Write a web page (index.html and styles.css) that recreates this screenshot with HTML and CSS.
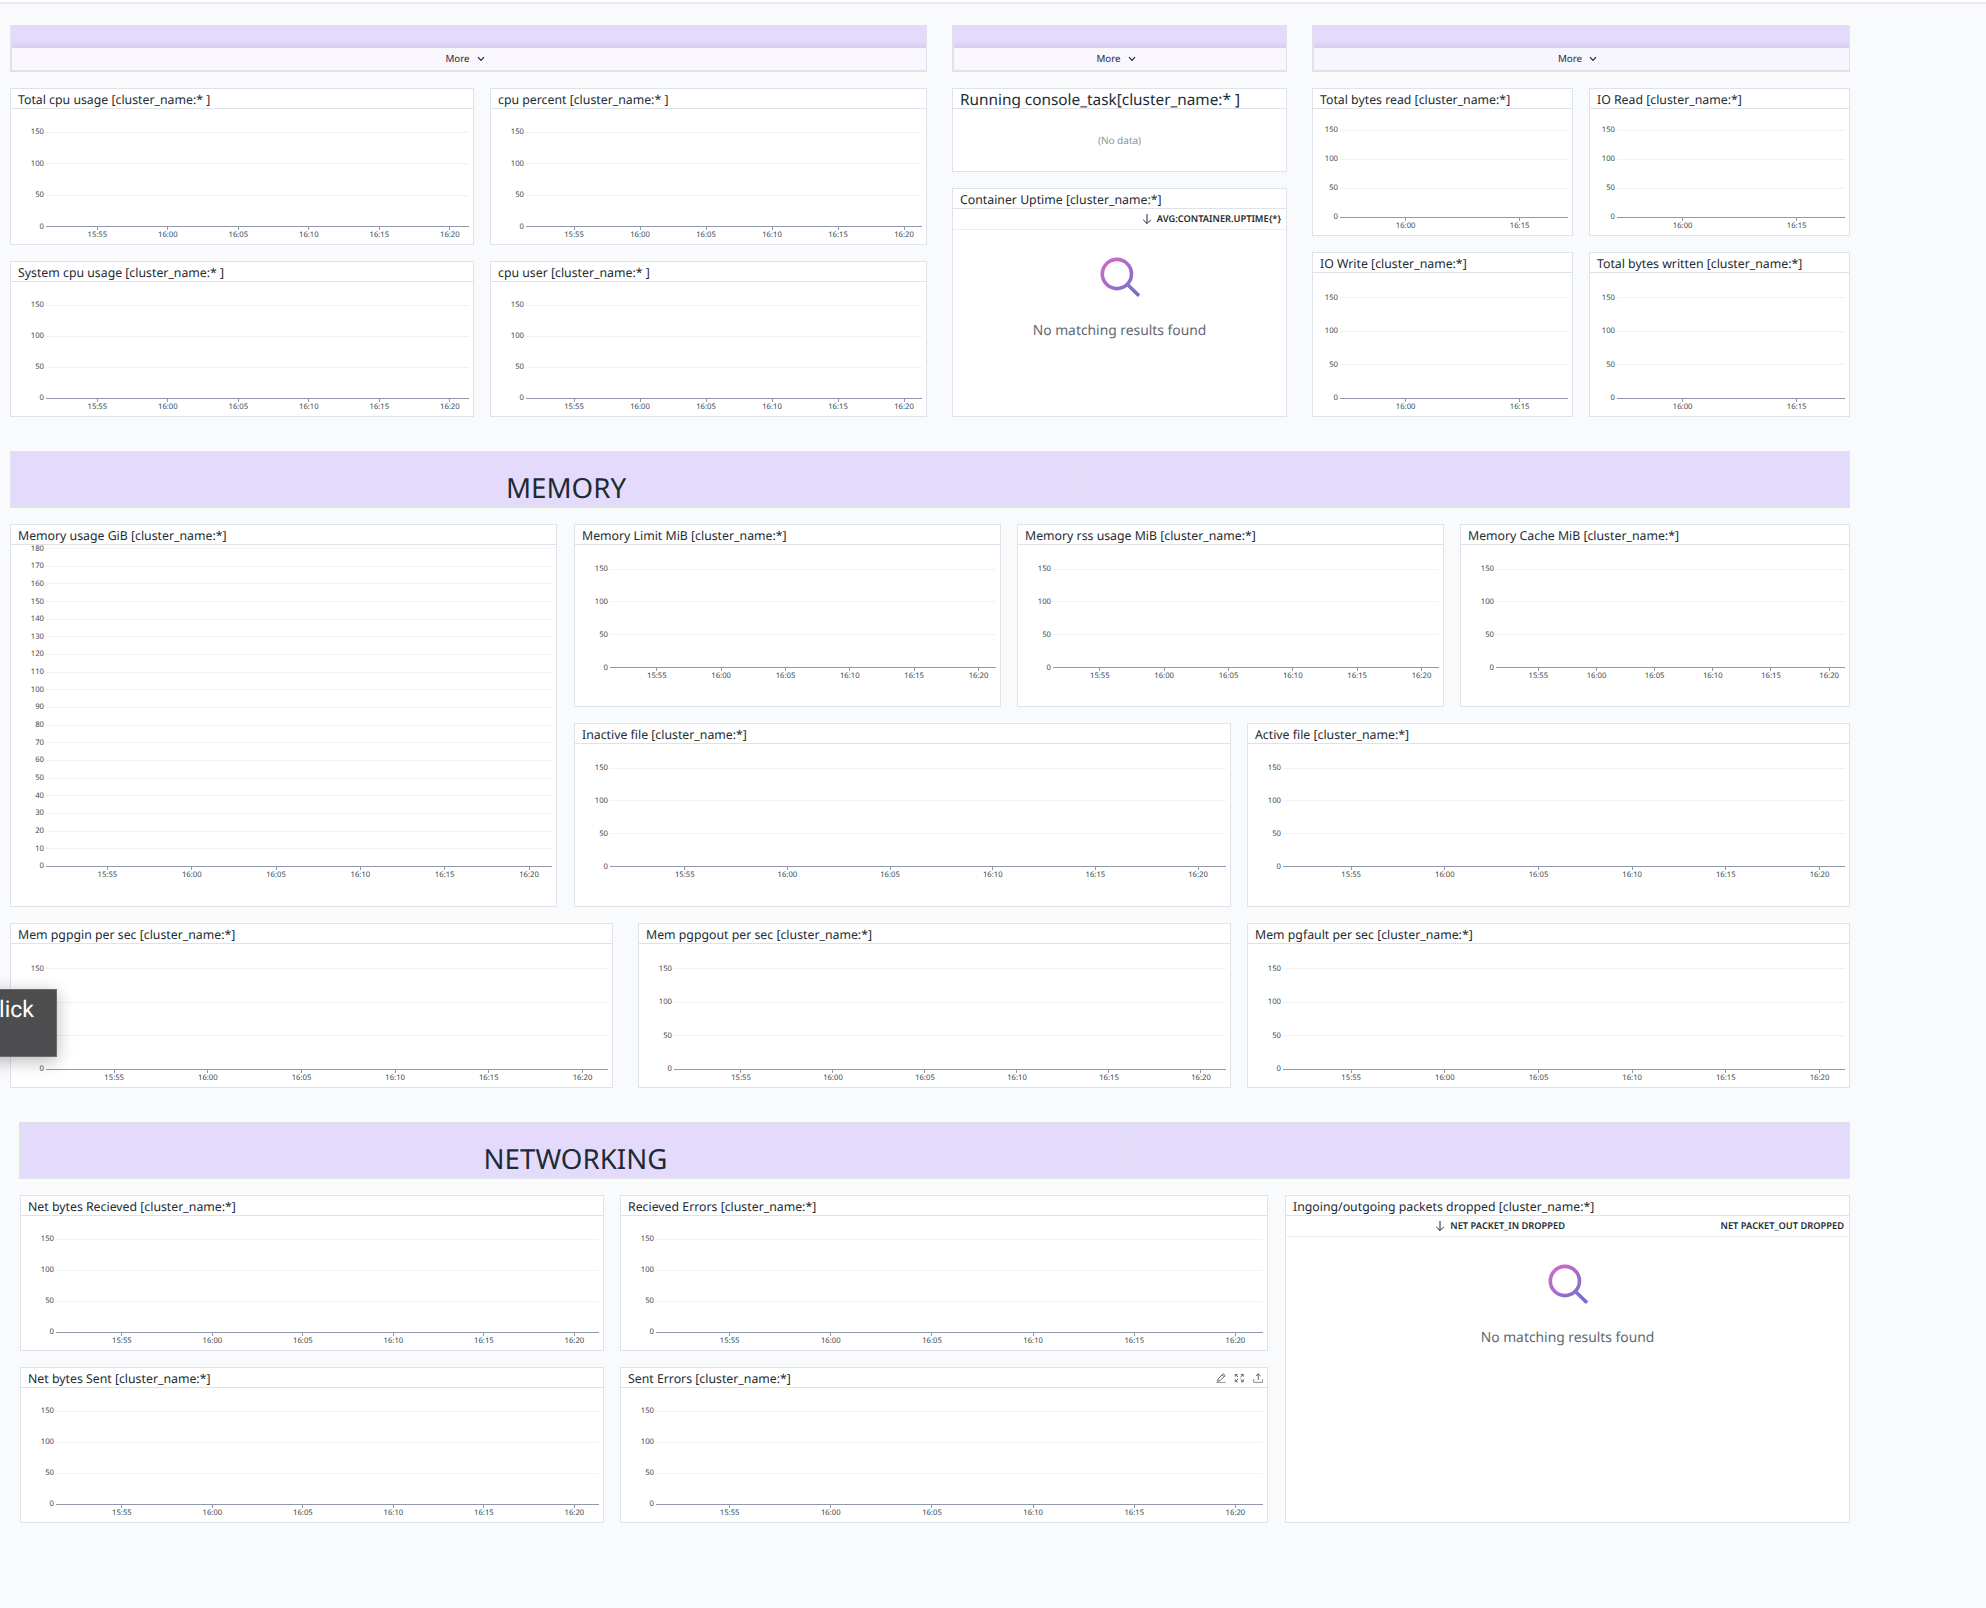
FILE: index.html
```html
<!DOCTYPE html>
<html lang="en">
<head>
<meta charset="utf-8">
<title>Containers dashboard</title>
<link rel="stylesheet" href="styles.css">
</head>
<body>
<svg class="defs" width="0" height="0" aria-hidden="true">
  <defs>
    <linearGradient id="lens" x1="0" y1="0" x2="1" y2="1">
      <stop offset="0" stop-color="#d36ac4"/>
      <stop offset="1" stop-color="#6a6fd0"/>
    </linearGradient>
    <symbol id="chevron" viewBox="0 0 8 6"><path d="M1 1.2 4 4.4 7 1.2" fill="none" stroke="currentColor" stroke-width="1.2"/></symbol>
    <symbol id="arrow-down" viewBox="0 0 10 12"><path d="M5 1v9.5M1.2 6.8 5 10.6l3.800-3.800" fill="none" stroke="currentColor" stroke-width="1"/></symbol>
    <symbol id="search" viewBox="0 0 42 42"><path d="M32.500 18a14.600 14.600 0 1 1-29.200 0 14.600 14.600 0 0 1 29.200 0zM28.200 28.200 40 39.800" fill="none" stroke="url(#lens)" stroke-width="3.600"/></symbol>
  </defs>
</svg>
<div class="topbar"></div>
<main class="board">

  <section class="overview">
    <div class="column">
      <div class="note"><div class="more">More <svg class="chevron"><use href="#chevron"/></svg></div></div>
      <div class="cpu-grid">
        <article class="panel"><h3>Total cpu usage [cluster_name:* ]</h3><div class="chart"></div></article>
        <article class="panel"><h3>cpu percent [cluster_name:* ]</h3><div class="chart"></div></article>
        <article class="panel"><h3>System cpu usage [cluster_name:* ]</h3><div class="chart"></div></article>
        <article class="panel"><h3>cpu user [cluster_name:* ]</h3><div class="chart"></div></article>
      </div>
    </div>
    <div class="column">
      <div class="note"><div class="more">More <svg class="chevron"><use href="#chevron"/></svg></div></div>
      <div class="status-grid">
        <article class="panel"><h3 class="large">Running console_task[cluster_name:* ]</h3><div class="nodata">(No data)</div></article>
        <article class="panel"><h3>Container Uptime [cluster_name:*]</h3>
          <div class="thead"><span class="th"><svg class="arrow"><use href="#arrow-down"/></svg>AVG:CONTAINER.UPTIME{*}</span></div>
          <div class="empty"><svg class="search"><use href="#search"/></svg><p>No matching results found</p></div>
        </article>
      </div>
    </div>
    <div class="column">
      <div class="note cool"><div class="more">More <svg class="chevron"><use href="#chevron"/></svg></div></div>
      <div class="io-grid">
        <article class="panel"><h3>Total bytes read [cluster_name:*]</h3><div class="chart" data-times="16:00 16:15"></div></article>
        <article class="panel"><h3>IO Read [cluster_name:*]</h3><div class="chart" data-times="16:00 16:15"></div></article>
        <article class="panel"><h3>IO Write [cluster_name:*]</h3><div class="chart" data-times="16:00 16:15"></div></article>
        <article class="panel"><h3>Total bytes written [cluster_name:*]</h3><div class="chart" data-times="16:00 16:15"></div></article>
      </div>
    </div>
  </section>

  <section class="banner memory-banner"><h2>MEMORY</h2><div></div></section>

  <section class="memory">
    <article class="panel"><h3>Memory usage GiB [cluster_name:*]</h3><div class="chart tall dense" data-max="180" data-step="10"></div></article>
    <div class="memory-right">
      <div class="memory-trio">
        <article class="panel"><h3>Memory Limit MiB [cluster_name:*]</h3><div class="chart tall"></div></article>
        <article class="panel"><h3>Memory rss usage MiB [cluster_name:*]</h3><div class="chart tall"></div></article>
        <article class="panel"><h3>Memory Cache MiB [cluster_name:*]</h3><div class="chart tall"></div></article>
      </div>
      <div class="memory-pair">
        <article class="panel"><h3>Inactive file [cluster_name:*]</h3><div class="chart tall"></div></article>
        <article class="panel"><h3>Active file [cluster_name:*]</h3><div class="chart tall"></div></article>
      </div>
    </div>
  </section>

  <section class="paging">
    <article class="panel"><h3>Mem pgpgin per sec [cluster_name:*]</h3><div class="chart"></div></article>
    <article class="panel"><h3>Mem pgpgout per sec [cluster_name:*]</h3><div class="chart"></div></article>
    <article class="panel"><h3>Mem pgfault per sec [cluster_name:*]</h3><div class="chart"></div></article>
  </section>

  <section class="banner network-banner"><h2>NETWORKING</h2><div></div></section>

  <section class="network">
    <div class="network-grid">
      <article class="panel"><h3>Net bytes Recieved [cluster_name:*]</h3><div class="chart"></div></article>
      <article class="panel"><h3>Recieved Errors [cluster_name:*]</h3><div class="chart"></div></article>
      <article class="panel"><h3>Net bytes Sent [cluster_name:*]</h3><div class="chart"></div></article>
      <article class="panel"><h3>Sent Errors [cluster_name:*]
        <span class="tools">
          <svg viewBox="0 0 10 10"><path d="M0 9.500h10" opacity=".6"/><path d="M1.300 8.300l.5-2.500L7 .8l1.900 1.800-5.200 5.200zM6 1.900l1.800 1.800"/></svg>
          <svg viewBox="0 0 10 10"><path d="M1 3.600V1.500h2.300M6.700 1.500H9v2.100M9 6.400v2.300H6.700M3.300 8.700H1V6.400M1.300 1.800l2.500 2.300M8.700 1.800 6.200 4.100M8.700 8.400 6.200 6M1.300 8.400 3.800 6"/></svg>
          <svg viewBox="0 0 10 10"><path d="M5 7V.8M2.700 3 5 .8 7.300 3"/><path d="M.5 6v3.300h9V6" opacity=".75"/></svg>
        </span></h3><div class="chart"></div></article>
    </div>
    <article class="panel"><h3>Ingoing/outgoing packets dropped [cluster_name:*]</h3>
      <div class="thead two"><span class="th"><svg class="arrow"><use href="#arrow-down"/></svg>NET PACKET_IN DROPPED</span><span class="th">NET PACKET_OUT DROPPED</span></div>
      <div class="empty"><svg class="search"><use href="#search"/></svg><p>No matching results found</p></div>
    </article>
  </section>
</main>
<div class="tip">lick</div>
<script src="charts.js"></script>
</body>
</html>
```
FILE: styles.css
```css
* { box-sizing: border-box; }
body {
  margin: 0;
  width: 1986px;
  height: 1608px;
  overflow: hidden;
  background: #f9fafc;
  color: #1c2b34;
  font-family: "Noto Sans", sans-serif;
  text-rendering: geometricPrecision;
}
h2, h3, p { margin: 0; font-weight: 400; }
.defs { display: block; height: 0; }
.topbar { height: 4px; background: #fff; border-bottom: 2px solid #e8eaf0; }
.board { width: 1850px; padding: 21px 0 0 10px; }

/* Panels */
.panel {
  display: flex;
  flex-direction: column;
  min-width: 0;
  min-height: 0;
  background: #fff;
  border: 1px solid #e0e2ea;
}
.panel h3 {
  flex: none;
  display: flex;
  height: 20px;
  padding-left: 7px;
  border-bottom: 1px solid #e0e2ea;
  font-size: 12.3px;
  line-height: 22px;
  white-space: nowrap;
}
.panel h3.large { font-size: 15.35px; line-height: 23px; overflow: hidden; }
.tools { display: flex; gap: 8px; margin: 5px 4px 0 auto; }
.tools svg { width: 10.5px; height: 10px; fill: none; stroke: #59636b; }

/* Overview */
.overview { display: grid; grid-template-columns: 917px 335px 538px; gap: 25px; }
.column { display: flex; flex-direction: column; gap: 16px; }
.note {
  height: 47px;
  padding-top: 22px;
  border: solid #e0e2ea;
  border-width: 1px 1px 2px 2px;
  background: linear-gradient(#e4dbfc 0 15px, #d7cdee 22px);
}
.more {
  display: flex;
  align-items: center;
  justify-content: center;
  gap: 7px;
  height: 22px;
  padding: 0 8px 1px 0;
  background: #f9f6fe;
  font-size: 9.8px;
}
.cool .more { background: #f7f5fe; }
.chevron { width: 8px; height: 6px; margin-top: 1px; }
.cpu-grid { display: grid; grid-template: 157px 156px / 464px 437px; gap: 16px; }
.status-grid { display: grid; grid-template-rows: 84px 229px; gap: 16px; }
.io-grid { display: grid; grid-template: 148px 165px / 261px 261px; gap: 16px; }
.nodata { flex: 1; text-align: center; padding-top: 24px; font-size: 10px; line-height: 14px; color: #8d949a; }

/* Table widgets */
.thead {
  display: flex;
  flex: none;
  justify-content: flex-end;
  height: 21px;
  padding-right: 5px;
  border-bottom: 1px solid #eceef3;
  font-size: 9.3px;
  font-weight: 600;
  line-height: 20px;
}
.th { display: flex; align-items: center; justify-content: flex-end; gap: 5px; }
.two .th { width: 279px; }
.arrow { width: 10px; height: 12px; }
.empty { display: flex; flex-direction: column; align-items: center; padding-top: 26px; color: #5f6970; font-size: 13.85px; }
.search { width: 42px; height: 42px; }
.empty p { margin-top: 22px; line-height: 21px; }

/* Section banners */
.banner { display: grid; height: 57px; border: solid #e0e2ea; border-width: 1px 1px 2px 2px; background: #e4dbfc; }
.banner h2 { border-right: 2px solid #e0dfee; text-align: center; font-size: 27.7px; line-height: 38px; padding-top: 17px; }
.memory-banner { margin-top: 34px; grid-template-columns: 1072px 1fr; }
.memory-banner h2 { padding-left: 38px; }
.network-banner { margin: 34px 0 0 9px; grid-template-columns: 1109px 1fr; }
.network-banner h2 { padding-left: 2px; }

/* Memory, paging and network rows */
.memory { display: grid; grid-template-columns: 547px 1fr; gap: 16px; height: 383px; margin-top: 16px; }
.memory-right { display: grid; grid-template-rows: 183px 184px; gap: 16px; margin-left: 1px; }
.memory-trio { display: grid; grid-template-columns: 427px 427px 390px; gap: 16px; }
.memory-pair { display: grid; grid-template-columns: 657px 603px; gap: 16px; }
.paging { display: grid; grid-template-columns: 603px 593px 602px; column-gap: 25px; height: 165px; margin-top: 16px; }
.paging .panel:last-child { margin-left: -9px; width: 603px; }
.network { display: grid; grid-template-columns: 1248px 565px; gap: 17px; height: 328px; margin: 16px 0 0 10px; }
.network-grid { display: grid; grid-template: 156px 156px / 584px 648px; gap: 16px; }

/* Charts */
.chart {
  --axis-width: 33px;
  flex: 1;
  display: flex;
  flex-direction: column;
  min-height: 0;
  padding-right: 4px;
  color: #38454e;
  font-size: 7.7px;
}
.io-grid .chart { --axis-width: 25px; }
.headroom { flex: 1; }
.dense .headroom { flex: .04; }
.scale { flex: 4.2; display: flex; flex-direction: column; justify-content: space-between; }
.level { display: flex; align-items: center; gap: 2px; height: 1px; }
.level span { width: var(--axis-width); text-align: right; line-height: 10px; }
.level i { flex: 1; height: 1px; background: #f1f2f4; }
.level:last-child i { background: #9298ab; }
.times { display: flex; height: 17px; margin-left: calc(var(--axis-width) + 2px); }
.tall .times { height: 39px; }
.memory-trio .times { height: 38px; }
.times::before { content: ""; flex: 0 0 3.8%; }
.times span { flex: 0 0 16.667%; display: flex; flex-direction: column; align-items: center; line-height: 10px; }
.times.sparse span { flex-basis: 50%; }
.times span::before { content: ""; width: 1px; height: 3px; background: #9298ab; }

/* Tooltip cut off by the left edge of the window */
.tip {
  position: absolute;
  left: -60px;
  top: 989px;
  width: 117px;
  height: 68px;
  padding: 6px 22px 0 0;
  border: 1px solid #6c6c6e;
  background: #4d4d4f;
  box-shadow: 0 4px 16px rgba(0, 0, 0, .28);
  color: #fff;
  font: 23px/28px Roboto, sans-serif;
  text-align: right;
}
```
FILE: charts.js
```js
// Fills each empty chart with its value scale and its time axis.
const defaultTimes = "15:55 16:00 16:05 16:10 16:15 16:20";

document.querySelectorAll(".chart").forEach((chart) => {
  const max = Number(chart.dataset.max || 150);
  const step = Number(chart.dataset.step || 50);
  const times = (chart.dataset.times || defaultTimes).split(" ");
  let levels = "";
  for (let v = max; v >= 0; v -= step) {
    levels += `<div class="level"><span>${v}</span><i></i></div>`;
  }
  const labels = times.map((t) => `<span>${t}</span>`).join("");
  chart.innerHTML =
    `<div class="headroom"></div><div class="scale">${levels}</div>` +
    `<div class="times${times.length < 3 ? " sparse" : ""}">${labels}</div>`;
});
```
